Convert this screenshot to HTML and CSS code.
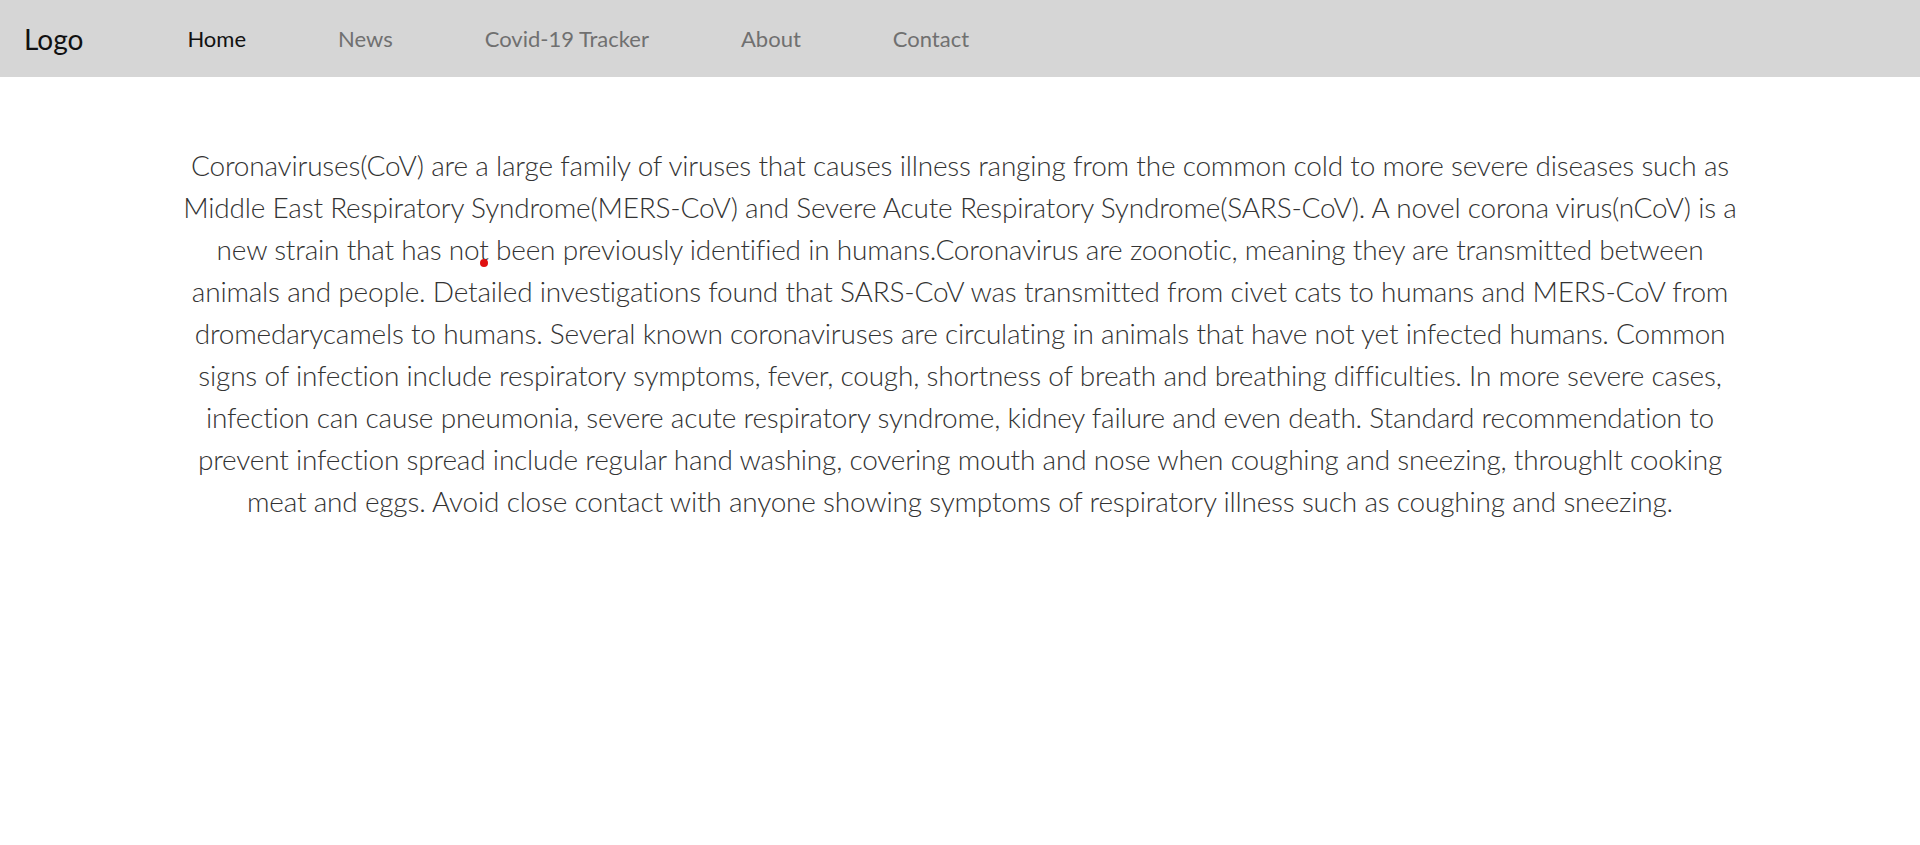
FILE: index.html
```html
<!DOCTYPE html>
<html lang="en">
<head>
<meta charset="utf-8">
<title>Covid-19</title>
<link rel="stylesheet" href="styles.css">
</head>
<body>
<header class="navbar">
  <div class="logo">Logo</div>
  <nav class="menu">
    <a class="menu-link active" href="#">Home</a>
    <a class="menu-link" href="#">News</a>
    <a class="menu-link" href="#">Covid-19 Tracker</a>
    <a class="menu-link" href="#">About</a>
    <a class="menu-link" href="#">Contact</a>
  </nav>
</header>
<main class="content">
  <p class="intro">Coronaviruses(CoV) are a large family of viruses that causes illness ranging from the common cold to more severe diseases such as Middle East Respiratory Syndrome(MERS-CoV) and Severe Acute Respiratory Syndrome(SARS-CoV). A novel corona virus(nCoV) is a new strain that has not been previously identified in humans.Coronavirus are zoonotic, meaning they are transmitted between animals and people. Detailed investigations found that SARS-CoV was transmitted from civet cats to humans and MERS-CoV from dromedarycamels to humans. Several known coronaviruses are circulating in animals that have not yet infected humans. Common signs of infection include respiratory symptoms, fever, cough, shortness of breath and breathing difficulties. In more severe cases, infection can cause pneumonia, severe acute respiratory syndrome, kidney failure and even death. Standard recommendation to prevent infection spread include regular hand washing, covering mouth and nose when coughing and sneezing, throughlt cooking meat and eggs. Avoid close contact with anyone showing symptoms of respiratory illness such as coughing and sneezing.</p>
  <span class="cursor-dot"></span>
</main>
</body>
</html>
```
FILE: styles.css
```css
html, body {
  margin: 0;
  padding: 0;
  background: #ffffff;
}

body {
  font-family: Lato, "Open Sans", sans-serif;
}

.navbar {
  display: flex;
  align-items: center;
  height: 77px;
  background: #d6d6d6;
  padding-left: 24px;
  box-sizing: border-box;
}

.logo {
  font-size: 28px;
  color: #111111;
  font-weight: 400;
  padding-top: 1px;
}

.menu {
  display: flex;
  gap: 92px;
  margin-left: 104px;
}

.menu-link {
  font-size: 22px;
  color: #707070;
  text-decoration: none;
  font-weight: 400;
}

.menu-link.active {
  color: #111111;
}

.content {
  max-width: 1570px;
  margin: 0 auto;
  padding-top: 67px;
}

.intro {
  margin: 0;
  text-align: center;
  font-size: 28px;
  line-height: 42px;
  font-weight: 300;
  letter-spacing: -0.2px;
  color: #333333;
}

.cursor-dot {
  position: absolute;
  left: 480px;
  top: 259px;
  width: 8px;
  height: 8px;
  border-radius: 50%;
  background: #e01010;
}
```
